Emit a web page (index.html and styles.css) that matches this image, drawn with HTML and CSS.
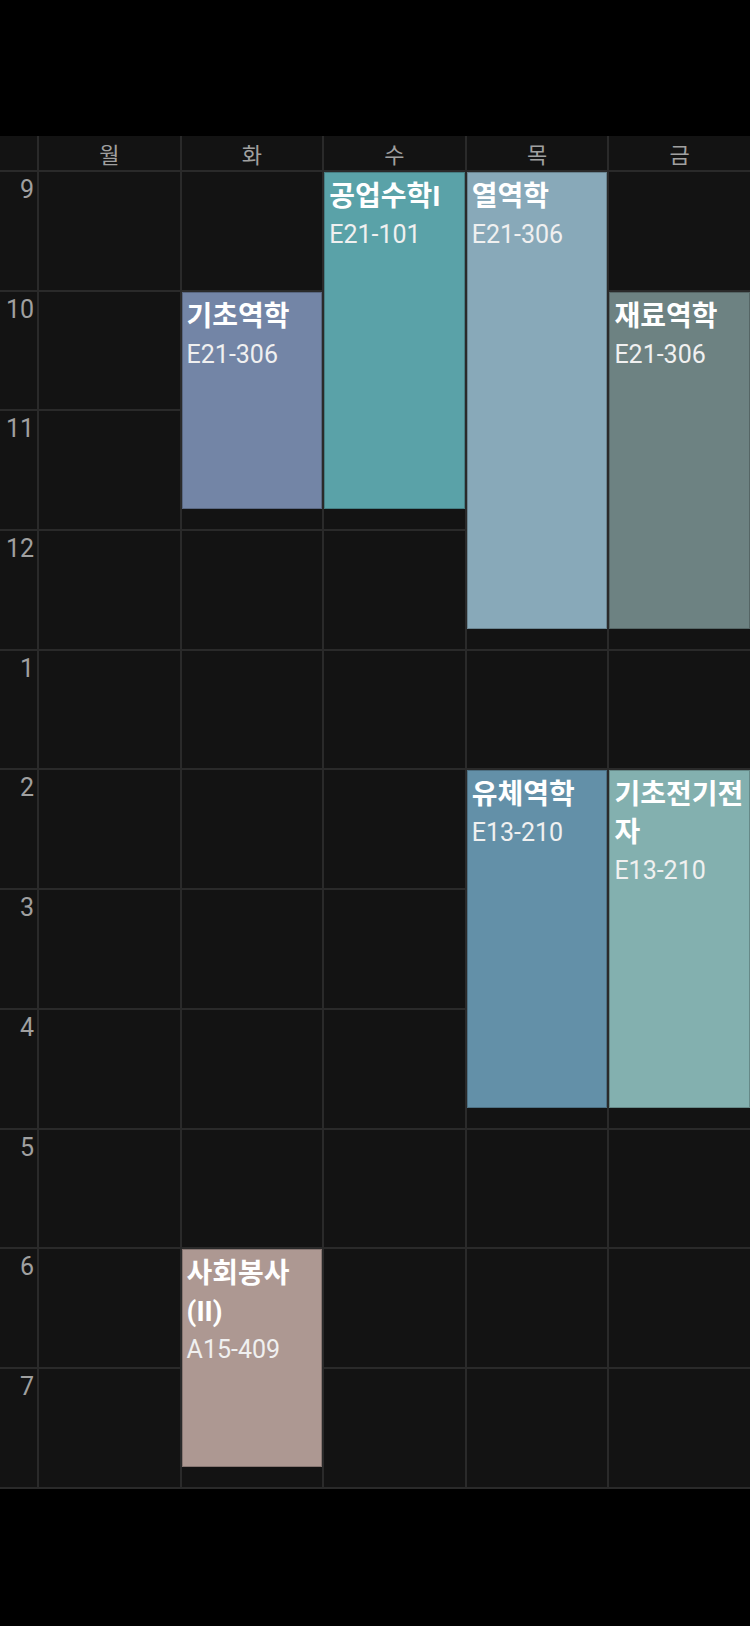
FILE: index.html
```html
<!DOCTYPE html>
<html lang="ko">
<head>
<meta charset="utf-8">
<title>시간표</title>
<link rel="stylesheet" href="styles.css">
</head>
<body>
<div class="statusbar"></div>
<div class="timetable">
  <div class="row r0">
    <div class="head"></div>
    <div class="head">월</div>
    <div class="head">화</div>
    <div class="head">수</div>
    <div class="head">목</div>
    <div class="head">금</div>
  </div>

  <div class="row r1"><div class="time">9</div><div class="cell"></div><div class="cell"></div><div class="cell"></div><div class="cell"></div><div class="cell"></div></div>
  <div class="row r2"><div class="time">10</div><div class="cell"></div><div class="cell"></div><div class="cell"></div><div class="cell"></div><div class="cell"></div></div>
  <div class="row r3"><div class="time">11</div><div class="cell"></div><div class="cell"></div><div class="cell"></div><div class="cell"></div><div class="cell"></div></div>
  <div class="row r4"><div class="time">12</div><div class="cell"></div><div class="cell"></div><div class="cell"></div><div class="cell"></div><div class="cell"></div></div>
  <div class="row r5"><div class="time">1</div><div class="cell"></div><div class="cell"></div><div class="cell"></div><div class="cell"></div><div class="cell"></div></div>
  <div class="row r6"><div class="time">2</div><div class="cell"></div><div class="cell"></div><div class="cell"></div><div class="cell"></div><div class="cell"></div></div>
  <div class="row r7"><div class="time">3</div><div class="cell"></div><div class="cell"></div><div class="cell"></div><div class="cell"></div><div class="cell"></div></div>
  <div class="row r8"><div class="time">4</div><div class="cell"></div><div class="cell"></div><div class="cell"></div><div class="cell"></div><div class="cell"></div></div>
  <div class="row r9"><div class="time">5</div><div class="cell"></div><div class="cell"></div><div class="cell"></div><div class="cell"></div><div class="cell"></div></div>
  <div class="row r10"><div class="time">6</div><div class="cell"></div><div class="cell"></div><div class="cell"></div><div class="cell"></div><div class="cell"></div></div>
  <div class="row r11"><div class="time">7</div><div class="cell"></div><div class="cell"></div><div class="cell"></div><div class="cell"></div><div class="cell"></div></div>

  <div class="course c-eng tue-10">
    <div class="title">기초역학</div>
    <div class="room">E21-306</div>
  </div>
  <div class="course c-math wed-9">
    <div class="title">공업수학I</div>
    <div class="room">E21-101</div>
  </div>
  <div class="course c-thermo thu-9">
    <div class="title">열역학</div>
    <div class="room">E21-306</div>
  </div>
  <div class="course c-mat fri-10">
    <div class="title">재료역학</div>
    <div class="room">E21-306</div>
  </div>
  <div class="course c-fluid thu-2">
    <div class="title">유체역학</div>
    <div class="room">E13-210</div>
  </div>
  <div class="course c-elec fri-2">
    <div class="title">기초전기전자</div>
    <div class="room">E13-210</div>
  </div>
  <div class="course c-vol tue-6">
    <div class="title">사회봉사 (II)</div>
    <div class="room">A15-409</div>
  </div>
</div>
</body>
</html>
```

FILE: styles.css
```css
html, body {
  margin: 0;
  padding: 0;
  background: #000;
}

body {
  width: 750px;
  height: 1626px;
  overflow: hidden;
  font-family: Roboto, "Noto Sans CJK KR", sans-serif;
}

.statusbar {
  height: 136px;
  background: #000;
}

.timetable {
  display: grid;
  grid-template-columns: 37px repeat(5, 1fr);
  grid-template-rows: 34px repeat(11, 117.7px);
  gap: 2px;
  padding-bottom: 2px;
  background: #2a2a2a;
}

.row { display: contents; }

.row > :nth-child(1) { grid-column: 1; }
.row > :nth-child(2) { grid-column: 2; }
.row > :nth-child(3) { grid-column: 3; }
.row > :nth-child(4) { grid-column: 4; }
.row > :nth-child(5) { grid-column: 5; }
.row > :nth-child(6) { grid-column: 6; }

.r0 > *  { grid-row: 1; }
.r1 > *  { grid-row: 2; }
.r2 > *  { grid-row: 3; }
.r3 > *  { grid-row: 4; }
.r4 > *  { grid-row: 5; }
.r5 > *  { grid-row: 6; }
.r6 > *  { grid-row: 7; }
.r7 > *  { grid-row: 8; }
.r8 > *  { grid-row: 9; }
.r9 > *  { grid-row: 10; }
.r10 > * { grid-row: 11; }
.r11 > * { grid-row: 12; }

.head {
  background: #131313;
  color: #a0a0a0;
  font-family: "Noto Sans CJK KR", sans-serif;
  font-size: 22px;
  line-height: 34px;
  text-align: center;
  font-weight: 400;
}

.cell {
  background: #131313;
}

.time {
  background: #131313;
  color: #a0a0a0;
  font-size: 25px;
  line-height: 25px;
  text-align: right;
  padding: 5px 3px 0 0;
}

.course {
  margin-bottom: 19.6px;
  padding: 6px 4px 0 5px;
  overflow: hidden;
  box-shadow: inset 0 0 0 1px rgba(0, 0, 0, 0.22);
  color: #fff;
}

.title {
  font-size: 28px;
  line-height: 38px;
  font-weight: 700;
  color: #fff;
}

.room {
  font-size: 25px;
  line-height: 32px;
  margin-top: 3px;
  color: #f0f0f0;
}

/* placement: column 2 = 월 ... 6 = 금; row 2 = 9시 */
.tue-10 { grid-column: 3; grid-row: 3 / span 2; }
.wed-9  { grid-column: 4; grid-row: 2 / span 3; }
.thu-9  { grid-column: 5; grid-row: 2 / span 4; }
.fri-10 { grid-column: 6; grid-row: 3 / span 3; }
.thu-2  { grid-column: 5; grid-row: 7 / span 3; }
.fri-2  { grid-column: 6; grid-row: 7 / span 3; }
.tue-6  { grid-column: 3; grid-row: 11 / span 2; }

.c-eng    { background: #7385a6; }
.c-math   { background: #5aa2a8; }
.c-thermo { background: #88a9b9; }
.c-mat    { background: #6d8282; }
.c-fluid  { background: #6390a8; }
.c-elec   { background: #83b0af; }
.c-vol    { background: #ad9892; }
```
